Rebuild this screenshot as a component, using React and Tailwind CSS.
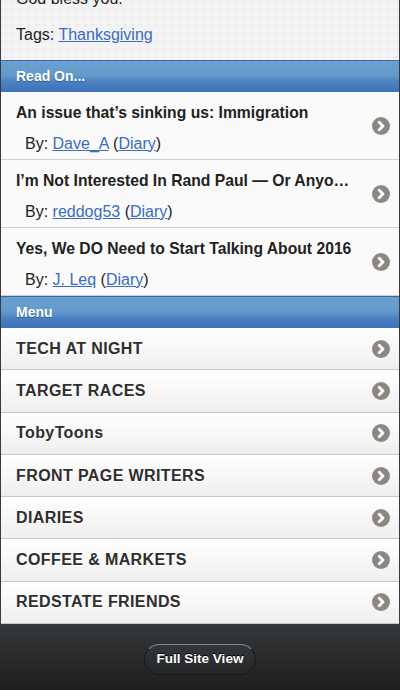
import React from "react";

const readOn = [
  { title: "An issue that\u2019s sinking us: Immigration", author: "Dave_A" },
  { title: "I\u2019m Not Interested In Rand Paul \u2014 Or Anyo\u2026", author: "reddog53" },
  { title: "Yes, We DO Need to Start Talking About 2016", author: "J. Leq" },
];

const menu = [
  "TECH AT NIGHT",
  "TARGET RACES",
  "TobyToons",
  "FRONT PAGE WRITERS",
  "DIARIES",
  "COFFEE & MARKETS",
  "REDSTATE FRIENDS",
];

function Chevron() {
  return (
    <svg width="18" height="18" viewBox="0 0 18 18" className="shrink-0">
      <circle cx="9" cy="9" r="9" fill="#8d8782" />
      <path d="M7.2 5.2 L11 9 L7.2 12.8" fill="none" stroke="#fff" strokeWidth="2.8" strokeLinecap="round" strokeLinejoin="round" />
    </svg>
  );
}

function SectionHeader({ children }) {
  return (
    <div className="h-[32px] flex items-center px-[15px] border-t border-[#3a67ad] bg-[linear-gradient(#6aa0cf_0%,#639bcb_45%,#4a7fc2_70%,#3e71ba_100%)] text-[14px] font-bold text-white [text-shadow:0_1px_1px_rgba(0,0,0,0.35)]">
      {children}
    </div>
  );
}

export default function App() {
  return (
    <div className="w-[400px] h-[690px] overflow-hidden bg-[#1c1c1c] font-['Liberation_Sans',Arial,sans-serif] text-[#222]">
      <div className="border-x border-[#3a3a3a] bg-[#f3f3f3]">
        <div className="px-[15px] pb-[15px] text-[16px] leading-5 bg-[radial-gradient(#d8d8d8_0.6px,transparent_0.8px)] bg-[length:8px_8px]">
          <p className="mt-[-11px]">God bless you.</p>
          <p className="mt-[16px]">
            Tags: <a className="text-[#3a6cc0] underline" href="#">Thanksgiving</a>
          </p>
        </div>

        <SectionHeader>Read On...</SectionHeader>
        {readOn.map((item) => (
          <div key={item.title} className="h-[68px] flex items-center border-b border-[#cfcfcf] bg-[#fafafa] pl-[15px] pr-[9px]">
            <div className="flex-1 min-w-0 pt-[5px]">
              <div className="text-[15.7px] leading-5 font-bold text-[#222] whitespace-nowrap overflow-hidden">{item.title}</div>
              <div className="mt-[11px] pl-[9px] text-[16px] leading-5 text-[#222]">
                By: <a className="text-[#3a6cc0] underline" href="#">{item.author}</a> (
                <a className="text-[#3a6cc0] underline" href="#">Diary</a>)
              </div>
            </div>
            <Chevron />
          </div>
        ))}

        <SectionHeader>Menu</SectionHeader>
        {menu.map((label) => (
          <div key={label} className="h-[42.3px] flex items-center justify-between border-b border-[#c9c9c9] bg-[linear-gradient(#ffffff,#efefef)] pl-[15px] pr-[9px]">
            <span className="text-[16px] font-bold tracking-[0.4px] text-[#2e2e2e] [text-shadow:0_1px_0_#fff]">{label}</span>
            <Chevron />
          </div>
        ))}
      </div>

      <div className="h-[70px] flex justify-center pt-[20px] bg-[linear-gradient(#35383b,#1c1c1c)]">
        <div className="h-[31px] px-[12px] flex items-center rounded-full border border-[#1a1a1a] border-t-[#8a8a8a] bg-[linear-gradient(#34373a,#232527)] text-[13.5px] font-bold text-white [text-shadow:0_-1px_0_#000]">
          Full Site View
        </div>
      </div>
    </div>
  );
}
